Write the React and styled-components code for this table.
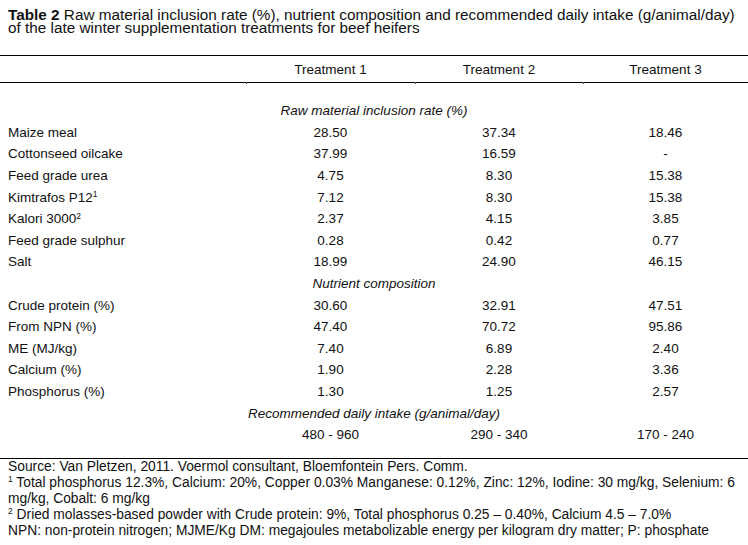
import React from 'react'
import styled, { createGlobalStyle } from 'styled-components'

const GlobalStyle = createGlobalStyle`
  html, body {
    margin: 0;
    padding: 0;
    background: #fff;
  }
  body {
    font-family: "Liberation Sans", Arial, sans-serif;
    color: #111;
  }
`

const Page = styled.div`
  width: 748px;
  height: 545px;
  overflow: hidden;
  background: #fff;
`

const Caption = styled.div`
  padding: 8px 8px 0;
  font-size: 15.3px;
  line-height: 13px;
  height: 55px;
  box-sizing: border-box;
  white-space: nowrap;

  b {
    font-weight: bold;
  }
`

const Table = styled.table`
  width: 748px;
  border-collapse: collapse;
  table-layout: fixed;
  font-size: 13.5px;
`

const HeadCell = styled.th`
  position: relative;
  height: 26px;
  padding: 0;
  font-weight: normal;
  text-align: center;
  border-top: 1px solid #000;
  border-bottom: 1px solid #000;
  vertical-align: middle;

  &::after {
    content: '';
    display: ${p => (p.$tick ? 'block' : 'none')};
    position: absolute;
    left: 0;
    bottom: -2px;
    width: 1px;
    height: 2px;
    background: #555;
  }
`

const SectionCell = styled.td`
  font-style: italic;
  text-align: center;
  padding: ${p => (p.$first ? '17px' : '0')} 0 0;
  height: 21.6px;
  box-sizing: content-box;
  vertical-align: middle;
`

const LabelCell = styled.td`
  padding: 0 0 ${p => (p.$last ? '12px' : '0')} 8px;
  height: 21.6px;
  box-sizing: content-box;
  white-space: nowrap;
  vertical-align: middle;
`

const ValueCell = styled.td`
  padding: 0 0 ${p => (p.$last ? '12px' : '0')};
  height: 21.6px;
  box-sizing: content-box;
  text-align: center;
  vertical-align: middle;
`

const Sup = styled.sup`
  font-size: 8.5px;
  line-height: 0;
  vertical-align: ${p => (p.$low ? '4px' : '5px')};
`

const Notes = styled.div`
  border-top: 1px solid #000;
  padding: 0 8px;
  font-size: 13.8px;
  line-height: 16px;
  white-space: nowrap;
`

const sections = [
  {
    title: 'Raw material inclusion rate (%)',
    rows: [
      ['Maize meal', '28.50', '37.34', '18.46'],
      ['Cottonseed oilcake', '37.99', '16.59', '-'],
      ['Feed grade urea', '4.75', '8.30', '15.38'],
      ['Kimtrafos P12', '7.12', '8.30', '15.38', '1'],
      ['Kalori 3000', '2.37', '4.15', '3.85', '2'],
      ['Feed grade sulphur', '0.28', '0.42', '0.77'],
      ['Salt', '18.99', '24.90', '46.15'],
    ],
  },
  {
    title: 'Nutrient composition',
    rows: [
      ['Crude protein (%)', '30.60', '32.91', '47.51'],
      ['From NPN (%)', '47.40', '70.72', '95.86'],
      ['ME (MJ/kg)', '7.40', '6.89', '2.40'],
      ['Calcium (%)', '1.90', '2.28', '3.36'],
      ['Phosphorus (%)', '1.30', '1.25', '2.57'],
    ],
  },
  {
    title: 'Recommended daily intake (g/animal/day)',
    rows: [['', '480 - 960', '290 - 340', '170 - 240']],
  },
]

const App = () => (
  <Page>
    <GlobalStyle />
    <Caption>
      <b>Table 2</b> Raw material inclusion rate (%), nutrient composition and recommended daily intake (g/animal/day)
      <br />
      of the late winter supplementation treatments for beef heifers
    </Caption>
    <Table>
      <colgroup>
        <col style={{ width: 246 }} />
        <col style={{ width: 169 }} />
        <col style={{ width: 168 }} />
        <col style={{ width: 165 }} />
      </colgroup>
      <thead>
        <tr>
          <HeadCell />
          <HeadCell $tick>Treatment 1</HeadCell>
          <HeadCell $tick>Treatment 2</HeadCell>
          <HeadCell $tick>Treatment 3</HeadCell>
        </tr>
      </thead>
      <tbody>
        {sections.map((section, si) => (
          <React.Fragment key={section.title}>
            <tr>
              <SectionCell colSpan={4} $first={si === 0}>
                {section.title}
              </SectionCell>
            </tr>
            {section.rows.map(([label, a, b, c, note], ri) => {
              const last = si === sections.length - 1 && ri === section.rows.length - 1
              return (
                <tr key={label + ri}>
                  <LabelCell $last={last}>
                    {label}
                    {note && <Sup $low={note === '2'}>{note}</Sup>}
                  </LabelCell>
                  <ValueCell $last={last}>{a}</ValueCell>
                  <ValueCell $last={last}>{b}</ValueCell>
                  <ValueCell $last={last}>{c}</ValueCell>
                </tr>
              )
            })}
          </React.Fragment>
        ))}
      </tbody>
    </Table>
    <Notes>
      Source: Van Pletzen, 2011. Voermol consultant, Bloemfontein Pers. Comm.
      <br />
      <Sup>1</Sup> Total phosphorus 12.3%, Calcium: 20%, Copper 0.03% Manganese: 0.12%, Zinc: 12%, Iodine: 30 mg/kg, Selenium: 6
      <br />
      mg/kg, Cobalt: 6 mg/kg
      <br />
      <Sup>2</Sup> Dried molasses-based powder with Crude protein: 9%, Total phosphorus 0.25 – 0.40%, Calcium 4.5 – 7.0%
      <br />
      NPN: non-protein nitrogen; MJME/Kg DM: megajoules metabolizable energy per kilogram dry matter; P: phosphate
    </Notes>
  </Page>
)

export default App
